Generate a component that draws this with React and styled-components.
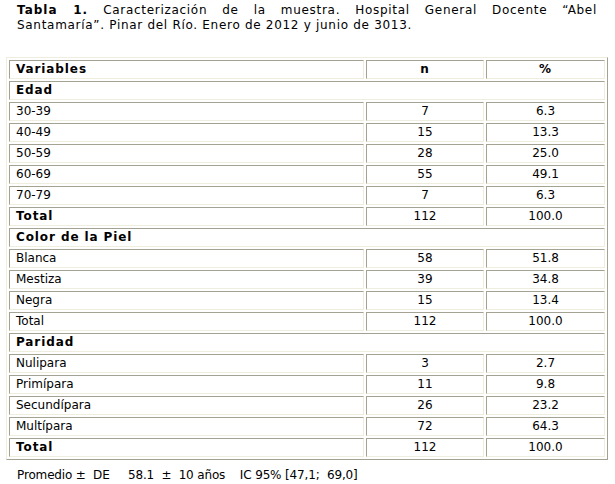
import React from "react";
import styled, { createGlobalStyle } from "styled-components";

const GlobalStyle = createGlobalStyle`
  body {
    margin: 0;
    background: #ffffff;
    color: #000000;
    font-family: "DejaVu Sans", Verdana, sans-serif;
    font-size: 12px;
  }
`;

const Page = styled.div`
  width: 615px;
  padding: 3px 6px 0 6px;
  box-sizing: border-box;
`;

const Caption = styled.div`
  margin: 0 0 24px 0;
  padding: 0 12px 0 11px;
  line-height: 15px;
  letter-spacing: 0.7px;

  b {
    letter-spacing: 1px;
  }
`;

const CaptionLine = styled.div`
  text-align: ${(p) => (p.justify ? "justify" : "left")};
  text-align-last: ${(p) => (p.justify ? "justify" : "left")};
`;

const Table = styled.table`
  width: 602px;
  table-layout: fixed;
  border-collapse: separate;
  border-spacing: 2px;
  border: 1px solid;
  border-color: #efeede #a3a293 #a3a293 #efeede;
`;

const Cell = styled.td`
  border: 1px solid;
  border-color: #a3a293 #efeede #efeede #a3a293;
  padding: 1px 6px 1px 6px;
  line-height: 15px;
  font-weight: ${(p) => (p.bold ? "bold" : "normal")};
  letter-spacing: ${(p) => (p.bold ? "0.9px" : "0")};
  text-align: ${(p) => (p.center ? "center" : "left")};
  white-space: nowrap;
`;

const Footer = styled.p`
  margin: 8px 0 0 11px;
  line-height: 15px;
  letter-spacing: -0.15px;
  white-space: pre;
`;

const groups = [
  {
    title: "Edad",
    rows: [
      ["30-39", "7", "6.3"],
      ["40-49", "15", "13.3"],
      ["50-59", "28", "25.0"],
      ["60-69", "55", "49.1"],
      ["70-79", "7", "6.3"],
    ],
    total: ["112", "100.0"],
    boldTotal: true,
  },
  {
    title: "Color de la Piel",
    rows: [
      ["Blanca", "58", "51.8"],
      ["Mestiza", "39", "34.8"],
      ["Negra", "15", "13.4"],
    ],
    total: ["112", "100.0"],
    boldTotal: false,
  },
  {
    title: "Paridad",
    rows: [
      ["Nulipara", "3", "2.7"],
      ["Primípara", "11", "9.8"],
      ["Secundípara", "26", "23.2"],
      ["Multípara", "72", "64.3"],
    ],
    total: ["112", "100.0"],
    boldTotal: true,
  },
];

export default function App() {
  return (
    <Page>
      <GlobalStyle />
      <Caption>
        <CaptionLine justify>
          <b>Tabla 1.</b> Caracterización de la muestra. Hospital General
          Docente “Abel
        </CaptionLine>
        <CaptionLine>
          Santamaría”. Pinar del Río. Enero de 2012 y junio de 3013.
        </CaptionLine>
      </Caption>
      <Table>
        <colgroup>
          <col style={{ width: 355 }} />
          <col style={{ width: 118 }} />
          <col style={{ width: 119 }} />
        </colgroup>
        <tbody>
          <tr>
            <Cell bold>Variables</Cell>
            <Cell bold center>n</Cell>
            <Cell bold center>%</Cell>
          </tr>
          {groups.map((g) => (
            <React.Fragment key={g.title}>
              <tr>
                <Cell bold colSpan={3}>{g.title}</Cell>
              </tr>
              {g.rows.map((r) => (
                <tr key={r[0]}>
                  <Cell>{r[0]}</Cell>
                  <Cell center>{r[1]}</Cell>
                  <Cell center>{r[2]}</Cell>
                </tr>
              ))}
              <tr>
                <Cell bold={g.boldTotal}>Total</Cell>
                <Cell center>{g.total[0]}</Cell>
                <Cell center>{g.total[1]}</Cell>
              </tr>
            </React.Fragment>
          ))}
        </tbody>
      </Table>
      <Footer>{"Promedio ±  DE     58.1  ±  10 años    IC 95% [47,1;  69,0]"}</Footer>
    </Page>
  );
}
